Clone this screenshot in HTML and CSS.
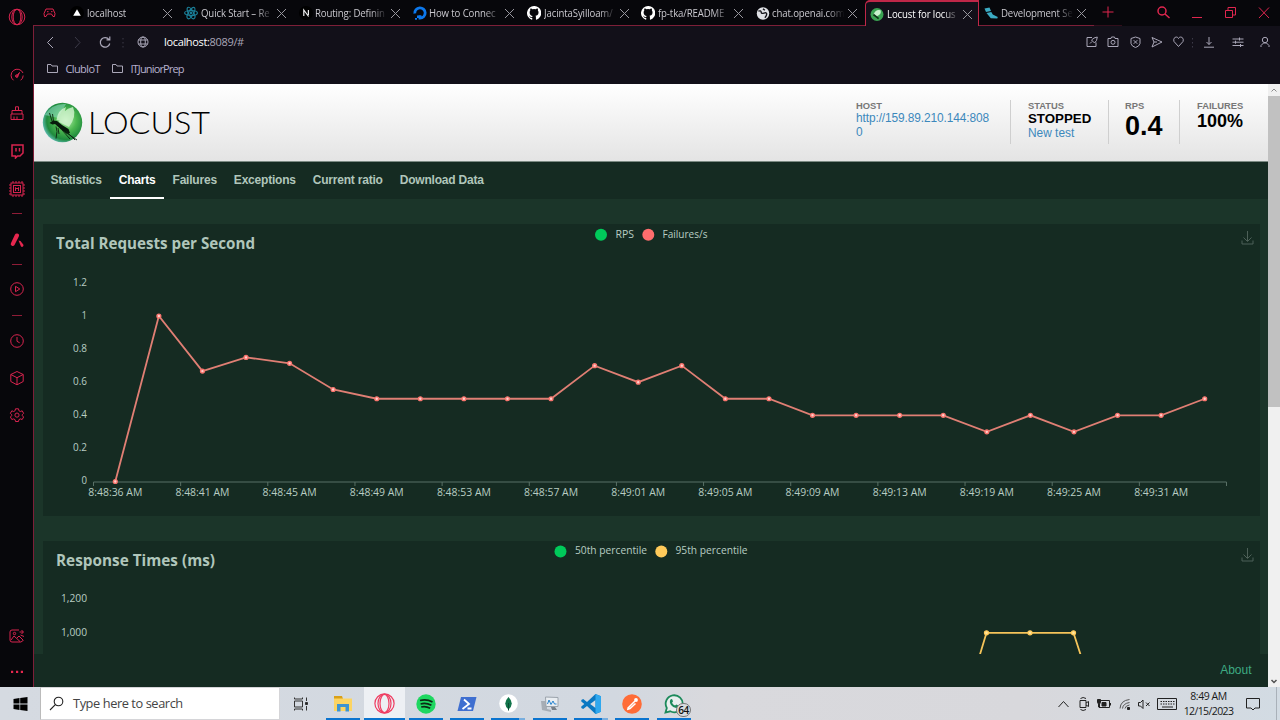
FILE: index.html
```html
<!DOCTYPE html>
<html lang="en">
<head>
<meta charset="utf-8">
<title>Locust for locustfile.py</title>
<link rel="stylesheet" href="styles.css">
</head>
<body>
<div class="browser">
  <aside class="rail">
    <div class="cell h34"><svg width="18" height="18" viewBox="0 0 18 18"><circle cx="9" cy="9" r="7.8"/><ellipse cx="9" cy="9" rx="3.8" ry="7.6"/><ellipse cx="9" cy="9" rx="5.2" ry="7.7"/></svg></div>
    <div class="cell h38 first"><svg width="16" height="16" viewBox="0 0 16 16"><path d="M4.5 13.3A6.2 6.2 0 1 1 14 6M14.2 8.5a6 6 0 0 1-2.6 4.8M7 9.5l3.5-4-2.3 5z"/><circle cx="7.7" cy="9" r="1.2"/></svg></div>
    <div class="cell h38"><svg width="16" height="16" viewBox="0 0 16 16"><path d="M6.5 5.5V1.8h3v3.7M3 9V5.5h10V9M2 9h12v5.5H2zM5 14v-2.5M8 14v-2.5"/></svg></div>
    <div class="cell h38"><svg width="16" height="16" viewBox="0 0 16 16"><path class="bold" d="M3 2h11v8l-3 3H8.500l-2 2v-2H3zM7 5v3.500M10.500 5v3.500"/></svg></div>
    <div class="cell h38"><svg width="18" height="18" viewBox="0 0 18 18"><rect x="3" y="3" width="12" height="12"/><rect x="5.500" y="5.500" width="7" height="7"/><path d="M5 3V1M8 3V1M11 3V1M14 3V1M5 17v-2M8 17v-2M11 17v-2M14 17v-2M1 5h2M1 8h2M1 11h2M1 14h2M15 5h2M15 8h2M15 11h2M15 14h2M7.500 11V7.500L9 9l1.500-1.500V11"/></svg></div>
    <div class="cell h10"><i class="dash"></i></div>
    <div class="cell h44"><svg width="16" height="16" viewBox="0 0 16 16"><path class="fill" d="M7.800 1.500a2 2 0 0 1 2 3L5.500 13a2 2 0 0 1-3.500-2l4-8.500a2 2 0 0 1 1.800-1z"/><path class="fill" d="M9.500 8.500l2 .5 2.700 3.500a1.500 1.500 0 0 1-2.200 2z"/></svg></div>
    <div class="cell h4"><i class="dash"></i></div>
    <div class="cell h46"><svg width="16" height="16" viewBox="0 0 16 16"><circle cx="8" cy="8" r="6.300"/><path d="M6.500 5.300v5.400L10.800 8z"/></svg></div>
    <div class="cell h6"><i class="dash"></i></div>
    <div class="cell h46"><svg width="16" height="16" viewBox="0 0 16 16"><circle cx="8" cy="8" r="6.300"/><path d="M8 4v4.300l2.700 1.500"/></svg></div>
    <div class="cell h28"><svg width="16" height="16" viewBox="0 0 16 16"><path d="M8 1.500l6.200 3v7L8 14.800l-6.200-3.300v-7zM1.800 4.500L8 7.700l6.200-3.200M8 7.700v7"/></svg></div>
    <div class="cell h46"><svg width="16" height="16" viewBox="0 0 16 16"><path d="M6.500 1.800h3l.4 1.900 1.400.8 1.900-.7 1.400 2.500-1.300 1.400v1l1.300 1.300-1.400 2.500-1.900-.6-1.400.8-.4 1.800h-3l-.4-1.800-1.400-.8-1.900.6L1.400 10l1.300-1.300v-1L1.400 6.300l1.400-2.500 1.900.7 1.400-.8z"/><circle cx="8" cy="8.100" r="2.100"/></svg></div>
    <div class="cell h42 bottom"><svg width="16" height="14" viewBox="0 0 16 14"><path d="M10 1H3a2 2 0 0 0-2 2v8a2 2 0 0 0 2 2h9l2-1.500M2 11l3-4 6 5.500M8 9l2-2 4.500 4.500M10.500 3h3.500M12.500 1l2 2-2 2M15 7.500L11.500 6"/><circle cx="5.500" cy="4.500" r="1.200"/></svg></div>
    <div class="cell h30"><svg width="14" height="4" viewBox="0 0 14 4"><path class="fill" d="M1 .8h2.200V3H1zM6 .8h2.200V3H6zM10.800.8H13V3h-2.200z"/></svg></div>
  </aside>

  <main class="window">
    <div class="tabstrip">
      <div class="pad"><svg width="13" height="10" viewBox="0 0 13 10"><path d="M3 1h7l2 4.500-.5 3H10L8.500 6h-4L3 8.500H1.500L1 5.500zM4 3.700h1.500M8 3.700h1.500"/></svg></div>
      <div class="tab"><svg class="fav" width="14" height="14" viewBox="0 0 14 14"><circle cx="7" cy="7" r="7" fill="#000"/><path fill="#fff" d="M7 3.200l3.800 6.500H3.200z"/></svg><span class="label">localhost</span><i class="x"></i></div>
      <div class="tab"><svg class="fav" width="14" height="14" viewBox="0 0 14 14" fill="none" stroke="#1b7f98" stroke-width="1.200"><ellipse cx="7" cy="7" rx="6.400" ry="2.500"/><ellipse cx="7" cy="7" rx="6.400" ry="2.500" transform="rotate(60 7 7)"/><ellipse cx="7" cy="7" rx="6.400" ry="2.500" transform="rotate(120 7 7)"/><circle cx="7" cy="7" r=".8"/></svg><span class="label">Quick Start – Re</span><i class="x"></i></div>
      <div class="tab"><svg class="fav" width="14" height="14" viewBox="0 0 14 14"><circle cx="7" cy="7" r="7" fill="#000"/><path d="M4.800 10V4l4.800 6.500M9.400 4v5" fill="none" stroke="#eee" stroke-width="1.200"/></svg><span class="label">Routing: Definin</span><i class="x"></i></div>
      <div class="tab"><svg class="fav" width="14" height="14" viewBox="0 0 14 14"><path d="M1.800 7.500A5.200 5.200 0 1 1 7 12.200V9.200" fill="none" stroke="#0c78ec" stroke-width="2.800"/><path fill="#0c78ec" d="M4 9.500h2.600V12H4zM2 12h2v1.800H2z"/></svg><span class="label">How to Connec</span><i class="x"></i></div>
      <div class="tab"><svg class="fav" width="14" height="14" viewBox="0 0 16 16"><path fill="#fff" d="M8 0a8 8 0 0 0-2.500 15.600c.4 0 .5-.2.500-.4v-1.500c-2.200.5-2.700-1-2.700-1-.4-.9-.9-1.200-.9-1.200-.7-.5 0-.5 0-.5.800.1 1.300.9 1.300.9.7 1.200 1.900.9 2.300.7 0-.6.3-.9.5-1.100C4.700 10.900 3 10.200 3 7.300c0-.9.3-1.600.8-2.100-.1-.3-.4-1.100.1-2.200 0 0 .7-.2 2.200.8a7.500 7.500 0 0 1 4 0c1.500-1 2.200-.8 2.200-.8.400 1.100.2 1.900.1 2.200.5.500.8 1.200.8 2.100 0 2.900-1.800 3.600-3.500 3.800.3.200.5.700.5 1.500v2.600c0 .2.200.5.600.4A8 8 0 0 0 8 0z"/></svg><span class="label">JacintaSyilloam/</span><i class="x"></i></div>
      <div class="tab"><svg class="fav" width="14" height="14" viewBox="0 0 16 16"><path fill="#fff" d="M8 0a8 8 0 0 0-2.500 15.600c.4 0 .5-.2.500-.4v-1.500c-2.200.5-2.700-1-2.700-1-.4-.9-.9-1.200-.9-1.200-.7-.5 0-.5 0-.5.800.1 1.300.9 1.300.9.7 1.200 1.900.9 2.300.7 0-.6.3-.9.5-1.100C4.700 10.900 3 10.200 3 7.300c0-.9.3-1.600.8-2.100-.1-.3-.4-1.100.1-2.200 0 0 .7-.2 2.200.8a7.500 7.500 0 0 1 4 0c1.500-1 2.200-.8 2.200-.8.400 1.100.2 1.900.1 2.200.5.500.8 1.200.8 2.100 0 2.900-1.800 3.600-3.500 3.800.3.200.5.700.5 1.500v2.600c0 .2.200.5.600.4A8 8 0 0 0 8 0z"/></svg><span class="label">fp-tka/README</span><i class="x"></i></div>
      <div class="tab"><svg class="fav" width="13" height="13" viewBox="0 0 14 14"><circle cx="7" cy="7" r="6.700" fill="#dfe1e5"/><path d="M2 4.500q3-1 3 1t3 1 3 1-2 4M7 2l2 1.500" fill="none" stroke="#15151b" stroke-width="1.500"/></svg><span class="label">chat.openai.com</span><i class="x"></i></div>
      <div class="tab active"><svg class="fav" width="13" height="13" viewBox="0 0 40 40"><circle cx="20" cy="20" r="20" fill="#3aa352"/><path d="M9 21Q15 3 31 7q4 12-11 18z" fill="#c8f2cd"/><path d="M9 20l16 13" stroke="#10331a" stroke-width="5"/></svg><span class="label">Locust for locus</span><i class="x"></i></div>
      <div class="tab"><svg class="fav" width="14" height="12" viewBox="0 0 14 12"><path fill="#3babc3" d="M.5 1.500l5-1L7 4l-5 1zM2.500 6l4.800-1 1.500 2.500 5 2.500-.5 1.500-6.500-.3z"/></svg><span class="label">Development Se</span><i class="x"></i></div>
      <div class="plus"><svg width="12" height="12" viewBox="0 0 12 12"><path d="M6 .5v11M.5 6h11"/></svg></div>
      <div class="controls">
        <svg width="34" height="26" viewBox="0 0 34 26"><circle cx="16" cy="11" r="4" stroke-width="1.500"/><path d="M19 14l4.500 4" stroke-width="1.500"/></svg>
        <svg width="33" height="26" viewBox="0 0 33 26"><path d="M12 17.500h10"/></svg>
        <svg width="34" height="26" viewBox="0 0 34 26"><path d="M12.500 10.500h7v7h-7zM15 10V7.500h7.500V15H20"/></svg>
        <svg width="33" height="26" viewBox="0 0 33 26"><path d="M12 7.500L22 18M22 7.500L12 18"/></svg>
      </div>
    </div>

    <div class="toolbar">
      <svg width="32" height="20" viewBox="0 0 32 20"><path d="M19 5l-5.500 5.500L19 16"/></svg>
      <svg class="dim" width="22" height="20" viewBox="0 0 22 20"><path d="M9 5l5 5.500L9 16"/></svg>
      <svg width="34" height="20" viewBox="0 0 34 20"><path d="M21 7.500a4.800 4.800 0 1 0 .8 4M21.800 4.500v3.300h-3.300" stroke-width="1.200"/></svg>
      <svg class="dim" width="2" height="20" viewBox="0 0 2 20"><path d="M1 6v10" stroke-dasharray="1.500 2.500"/></svg>
      <svg width="38" height="20" viewBox="0 0 38 20"><circle cx="19" cy="10" r="5"/><ellipse cx="19" cy="10" rx="2.300" ry="5"/><path d="M14.500 8h9M14.500 12h9"/></svg>
      <span class="url"><b>localhost:</b>8089/#</span>
      <div class="actions">
        <svg width="22" height="20" viewBox="0 0 22 20"><path d="M11 5.500H6v9h9V10.500M9 11.500l2-2M10.500 8l3 3 2-2.500 .8-3.500-3.300 1z"/></svg>
        <svg width="20" height="20" viewBox="0 0 20 20"><path d="M5 6.500h3l.5-1.500h3l.5 1.500h3v8H5z"/><circle cx="10" cy="10.300" r="2"/></svg>
        <svg width="25" height="20" viewBox="0 0 25 20"><path d="M12.500 5l4.500 1.500v5l-1.500 2.500-3 1.500-3-1.500L8 11.500v-5zM10.700 8.200l3.600 3.600M14.300 8.200l-3.600 3.600"/></svg>
        <svg width="18" height="20" viewBox="0 0 18 20"><path d="M4 5.500l10 4.500-10 5 2-5zM6 10h3"/></svg>
        <svg width="25" height="20" viewBox="0 0 25 20"><path d="M12.500 14.500L8 9.500C6.500 5.500 11 3.500 12.500 6.500c1.500-3 6-1 4.500 3z"/></svg>
        <svg class="dim" width="3" height="20" viewBox="0 0 3 20"><path d="M1.500 6v10" stroke-dasharray="1.500 2.500"/></svg>
        <svg width="31" height="20" viewBox="0 0 31 20"><path d="M15 5v7.500M12.500 10l2.500 2.500L17.500 10M10 15.200h10"/></svg>
        <svg width="26" height="20" viewBox="0 0 26 20"><path d="M7.500 7h11M7.500 10.200h11M7.500 13.500h11M14.500 5.500v3M10.500 8.700v3M15.500 12v3"/></svg>
        <svg width="28" height="20" viewBox="0 0 28 20"><circle cx="14" cy="8" r="2.700"/><path d="M10 15v-1.500l2.500-2.500h3l2.500 2.500V15"/></svg>
      </div>
    </div>
    <div class="bookmarks">
      <span class="mark"><svg width="11" height="9" viewBox="0 0 11 9"><path d="M.5.500h3.500l1 1.500h5.500v6.500H.5z"/></svg>ClubIoT</span>
      <span class="mark"><svg width="11" height="9" viewBox="0 0 11 9"><path d="M.5.500h3.500l1 1.500h5.500v6.500H.5z"/></svg><em class="prep">ITJuniorPrep</em></span>
    </div>

    <div class="viewport">
      <div class="page">
        <header class="top">
          <svg class="logo" width="170" height="42" viewBox="42 102 170 42">
            <defs><radialGradient id="ball" cx=".58" cy=".45" r=".6"><stop offset="0" stop-color="#b5efae"/><stop offset=".45" stop-color="#4cb850"/><stop offset=".8" stop-color="#1f8a3d"/><stop offset="1" stop-color="#5fbdb4"/></radialGradient></defs>
            <circle cx="62.500" cy="122.500" r="19.700" fill="url(#ball)"/>
            <path d="M45 115q7-12 21-11l-8 14z" fill="#8fdcc8" opacity=".55"/>
            <path d="M56.500 120q1-10 9.500-13l-4 14zM59 122q3-13 14-15 4 9-4 20z" fill="#d5f5d2" opacity=".8"/>
            <path d="M49.500 123l3.500-2.500 4 .5 5 4 6.500 4 1.500 4-3 .8-6-4.300-6-5.500-2.500.5z" fill="#071a0c"/>
            <path d="M52 121l-2.500-8M53.500 121l-1-7M56 126.500l1 5-1 7M58 128l1 6M65 132l12 8M66 131l9 9M62 130l8 9" fill="none" stroke="#0b2411" stroke-width=".9"/>
            <text class="wordmark" x="88" y="133.500" textLength="122" lengthAdjust="spacingAndGlyphs">LOCUST</text>
          </svg>
          <div class="stats">
            <div class="stat host"><div class="cap">HOST</div><a>http://159.89.210.144:8080</a></div>
            <div class="stat status"><div class="cap">STATUS</div><div class="state">STOPPED</div><a>New test</a></div>
            <div class="stat rps"><div class="cap">RPS</div><div class="big">0.4</div></div>
            <div class="stat fails"><div class="cap">FAILURES</div><div class="mid">100%</div></div>
          </div>
        </header>
        <nav class="menu"><a>Statistics</a><a class="on">Charts</a><a>Failures</a><a>Exceptions</a><a>Current ratio</a><a>Download Data</a></nav>
        <section class="content">
          <svg class="chart" id="rps" width="1217" height="292" viewBox="43 224 1217 292">
            <text class="title" x="56" y="249" textLength="199" lengthAdjust="spacingAndGlyphs">Total Requests per Second</text>
            <circle cx="601" cy="234.700" r="6" fill="#00ca5a"/><text x="615.500" y="237.700" textLength="18.500" lengthAdjust="spacingAndGlyphs">RPS</text>
            <circle cx="648.300" cy="234.700" r="6" fill="#ff6d6d"/><text x="662.500" y="237.700" textLength="45" lengthAdjust="spacingAndGlyphs">Failures/s</text>
            <path class="save" d="M1247.500 231v10M1243.500 237.500l4 4 4-4M1242 240.500v3.500h11v-3.500"/>
          </svg>
          <svg class="chart second" id="times" width="1217" height="114" viewBox="43 541 1217 114">
            <text class="title" x="56" y="566" textLength="159" lengthAdjust="spacingAndGlyphs">Response Times (ms)</text>
            <circle cx="560.500" cy="551.500" r="6" fill="#00ca5a"/><text x="575" y="554.300" textLength="72" lengthAdjust="spacingAndGlyphs">50th percentile</text>
            <circle cx="661.300" cy="551.500" r="6" fill="#ffca5a"/><text x="675.500" y="554.300" textLength="72" lengthAdjust="spacingAndGlyphs">95th percentile</text>
            <path class="save" d="M1247.500 548v10M1243.500 554.500l4 4 4-4M1242 557.500v3.500h11v-3.500"/>
            <text class="tick" x="87" y="602.200" textLength="26" lengthAdjust="spacingAndGlyphs">1,200</text>
            <text class="tick" x="87" y="635.700" textLength="26" lengthAdjust="spacingAndGlyphs">1,000</text>
            <path d="M979.500 656l7-23.200h87l7.500 23.200" fill="none" stroke="#f5c45a" stroke-width="1.800"/>
            <g fill="#ffe49c" stroke="#ffca5a" stroke-width="1.300"><circle cx="986.500" cy="632.800" r="2"/><circle cx="1030" cy="632.800" r="2"/><circle cx="1073.500" cy="632.800" r="2"/></g>
          </svg>
        </section>
        <footer class="foot"><a>About</a></footer>
      </div>
      <div class="scroll">
        <svg width="12" height="12" viewBox="0 0 12 12"><path d="M3.500 7.500L6 5l2.500 2.500" stroke="#8a8a8a"/></svg>
        <div class="thumb"></div>
        <svg class="down" width="12" height="12" viewBox="0 0 12 12"><path d="M3.500 5L6 7.500 8.500 5" stroke="#505050" stroke-width="1.500"/></svg>
      </div>
    </div>
  </main>
</div>

<div class="taskbar">
  <div class="start"><svg width="15" height="14" viewBox="0 0 15 14"><path d="M.5 2l6-.9v5.500h-6zM7.200 1L14.500 0v6.600H7.200zM.5 7.400h6v5.500l-6-.9zM7.200 7.400h7.300V14l-7.300-1z"/></svg></div>
  <div class="search"><svg width="15" height="15" viewBox="0 0 15 15"><circle cx="9.500" cy="5.500" r="4.300"/><path d="M6.300 8.700L1 14"/></svg><span>Type here to search</span></div>
  <div class="view"><svg width="16" height="14" viewBox="0 0 16 14"><path d="M1.500 4h8v6h-8zM1.500.5V2h8V.5M1.500 13.500V12h8v1.500M13.500.5V4M13.500 9v4.500"/><path d="M12.500 5.500h2v2h-2z" fill="#222"/></svg></div>
  <div class="app run"><svg width="20" height="18" viewBox="0 0 20 18"><path fill="#d9a017" d="M1 1h8l1 3H1z"/><path fill="#fcd462" d="M1 3.500h18V16H1z"/><path fill="#3d94d2" d="M4 9h12v7.500h-3.500V12h-5v4.500H4z"/></svg></div>
  <div class="app run lit"><svg width="21" height="21" viewBox="0 0 21 21" fill="none" stroke="#ef3d62" stroke-width="1.200"><circle cx="10.500" cy="10.500" r="9.600"/><ellipse cx="10.500" cy="10.500" rx="4.500" ry="9"/><ellipse cx="10.500" cy="10.500" rx="6.500" ry="9.300"/></svg></div>
  <div class="app run"><svg width="20" height="20" viewBox="0 0 20 20"><circle cx="10" cy="10" r="9.700" fill="#1ed760"/><path d="M4 6.500q6.500-1.800 12.500 1.400M4.600 10q5.500-1.500 10.800 1.300M5.200 13q4.500-1.200 9 1.200" fill="none" stroke="#0b2a14" stroke-width="1.700"/></svg></div>
  <div class="app run"><svg width="20" height="16" viewBox="0 0 20 16"><path fill="#3f6fd0" d="M4 1h15.500l-3.500 14H.5z"/><path d="M7 3.500l5 4.500-6.500 5M10.500 12.500h4" fill="none" stroke="#fff" stroke-width="1.800"/></svg></div>
  <div class="app run multi"><svg width="19" height="19" viewBox="0 0 19 19"><circle cx="9.500" cy="9.500" r="9.300" fill="#fff"/><path fill="#11744a" d="M9.500 3q6.500 6.500 0 12.500-6.500-6 0-12.500z"/><path d="M9.500 9v7.500" stroke="#0a4d35"/></svg></div>
  <div class="app run"><svg width="20" height="18" viewBox="0 0 20 18"><path fill="#a6adb5" d="M1 6h6v8l4 1v2l-9-2z"/><path fill="#e9edf1" stroke="#9ca4ac" d="M5.500 2l12.500.5v9L6 11.500z"/><path d="M7.500 9l1.500-4 2 4.500L13 6l1.500 3h2" fill="none" stroke="#2583cf"/><path fill="#777f87" d="M11 12h4l2 3h-5z"/></svg></div>
  <div class="app run multi"><svg width="20" height="20" viewBox="0 0 20 20"><path fill="#0a78c2" d="M14.500 0L20 2.300v15.400L14.500 20 6 12l-3.800 3L.3 14v-1.500L3.300 10 .3 7.500V6l1.900-1L6 8z"/><path fill="#d7dce3" d="M14.500 6v8L9.200 10z"/><path fill="#2fa8ef" d="M14.500 0L20 2.300v15.400L14.500 20z"/></svg></div>
  <div class="app run"><svg width="20" height="20" viewBox="0 0 20 20"><circle cx="10" cy="10" r="9.800" fill="#ff6c37"/><path d="M5.500 14.500L13 7M5 15.500l3-1 5.500-5" fill="none" stroke="#fff" stroke-width="1.500"/><circle cx="14" cy="6" r="1.900" fill="#fff"/></svg></div>
  <div class="app run wa"><svg width="20" height="20" viewBox="0 0 20 20"><path d="M1.500 18.500L2.800 14A8.500 8.500 0 1 1 6.200 17.300z" fill="#e9eeee" stroke="#1c8a5b" stroke-width="1.800"/><path fill="#1c8a5b" d="M6.500 5.500q1.500-1 2 .5l.5 1.500-1 1.200q1 2 3 2.800l1.300-1 2.200 1q0 2-2 2.500-3 .2-5.500-3-2-3-.5-5.500z"/></svg><span class="badge">64</span></div>
  <div class="tray">
    <svg width="21" height="20" viewBox="0 0 21 20"><path d="M5.500 13l5-5.500 5 5.500"/></svg>
    <svg width="20" height="20" viewBox="0 0 20 20"><path d="M6 6.500h6v7H6zM12 9l2.500-1.500v5L12 11M6.500 4.500Q9 2.500 12 4.500M6.500 15.500q2.500 2 5.500 0"/></svg>
    <svg width="20" height="20" viewBox="0 0 20 20"><path d="M5 6.500h10.500v7H5M16.500 9v2.500"/><path d="M3.500 5.500h3v3l-1 1.500V13h-1v-3l-1-1.500zM8 8.500h4V12H8z" fill="#222"/></svg>
    <svg width="21" height="20" viewBox="0 0 21 20"><path d="M6 14.500Q6.500 6.500 15.500 5.500M8.500 14.500q.5-5 7-6M11 14.500q.5-3 4.500-3.500" stroke="#555"/><path d="M13.500 13.500h2v2h-2z" fill="#222"/></svg>
    <svg width="18" height="20" viewBox="0 0 18 20"><path d="M3.500 8.500h2L8 6v8.500L5.500 12h-2zM11 8.500l3.500 3.500M14.500 8.500L11 12"/></svg>
    <svg width="29" height="20" viewBox="0 0 29 20"><path d="M4.500 4.500h19v11h-19z"/><path d="M7.500 7.500h14M7.500 10h14" stroke-dasharray="1.500 1"/><path d="M9 13h11"/></svg>
    <div class="clock"><span>8:49 AM</span><span class="date">12/15/2023</span></div>
    <svg class="note" width="14" height="14" viewBox="0 0 14 14"><path d="M.5 1.500h13v9.500H9L7 13l-2-2H.5z"/></svg>
    <i class="peek"></i>
  </div>
</div>
<script src="charts.js"></script>
</body>
</html>
```
FILE: styles.css
```css
* { box-sizing: border-box; }
body {
  margin: 0;
  width: 1280px;
  height: 720px;
  overflow: hidden;
  background: #07070b;
  font-family: "Open Sans", "Noto Sans", sans-serif;
  font-size: 11px;
}
svg { display: block; flex: none; }
.browser { display: flex; height: 687px; }

/* side rail */
.rail { width: 33px; display: flex; flex-direction: column; background: #07070b; }
.rail .cell { display: flex; align-items: center; justify-content: center; padding-left: 1px; flex: none; }
.rail svg { fill: none; stroke: #d8244f; stroke-width: 1; }
.rail svg .fill { fill: #e6274f; stroke: none; }
.rail svg .bold { stroke-width: 1.5; }
.dash { width: 10px; height: 1px; background: #8f1c37; }
.h34 { height: 34px; } .h38 { height: 38px; } .h10 { height: 10px; } .h44 { height: 44px; }
.h4 { height: 4px; } .h46 { height: 46px; } .h6 { height: 6px; } .h28 { height: 28px; }
.h42 { height: 42px; } .h30 { height: 30px; }
.first { margin-top: 22px; }
.bottom { margin-top: auto; }

/* tab strip */
.window { width: 1247px; display: flex; flex-direction: column; border-left: 1px solid #7d1f38; background: #121019; }
.tabstrip { display: flex; height: 26px; margin-left: -1px; background: #07070b; }
.pad { width: 32px; padding: 8px 0 0 10px; border-bottom: 1px solid #7d1f38; flex: none; }
.pad svg, .plus svg, .controls svg { fill: none; stroke: #e0264f; }
.tab { width: 114.3px; display: flex; align-items: center; border-bottom: 1px solid #7d1f38; padding: 1px 7px 0 5px; color: #c9c8ce; flex: none; }
.fav { width: 14px; margin-right: 2.5px; }
.label {
  width: 86px; margin-right: -11px; white-space: nowrap; flex: none;
  font-size: 11.2px; letter-spacing: -0.15px; line-height: 18px;
  transform: scaleX(.86); transform-origin: left;
  -webkit-mask-image: linear-gradient(90deg, #000 75%, transparent 98%);
  mask-image: linear-gradient(90deg, #000 75%, transparent 98%);
}
.x {
  width: 9px; height: 9px; flex: none; margin-left: 1px;
  background: linear-gradient(45deg, transparent 46%, #97969d 47%, #97969d 53%, transparent 54%),
    linear-gradient(-45deg, transparent 46%, #97969d 47%, #97969d 53%, transparent 54%);
}
.tab.active { background: #121019; border: 1px solid #c02748; border-top-width: 2px; border-bottom: 0; border-top-left-radius: 5px; padding: 0 6px 0 4px; color: #fff; }
.plus { width: 28px; padding: 6px 0 0 8px; border-bottom: 1px solid #320e1b; }
.controls { display: flex; margin-left: auto; }

/* address bar */
.toolbar { display: flex; align-items: center; height: 32px; color: #a9a6b8; }
.toolbar svg, .bookmarks svg { fill: none; stroke: #aaa7b8; }
.toolbar svg.dim { stroke: #3c3a48; }
.url { margin-left: 2px; font-size: 11px; letter-spacing: -0.34px; padding-bottom: 1px; }
.url b { font-weight: 400; color: #fff; }
.actions { display: flex; margin-left: auto; padding-right: 1.5px; }
.bookmarks { display: flex; height: 26px; align-items: center; padding: 0 0 5px 13px; color: #b7b2cf; }
.mark { display: flex; align-items: center; gap: 7.5px; margin-right: 12px; font-size: 11px; letter-spacing: -0.65px; }
.prep { font-style: normal; letter-spacing: -0.85px; }

/* web page */
.viewport { display: flex; height: 603px; }
.page { width: 1234px; background: #1b3529; display: flex; flex-direction: column; font-family: "Liberation Sans", Arial, sans-serif; }
.top { height: 78px; display: flex; background: linear-gradient(#fff, #e4e4e4); border-bottom: 1px solid #7b8a83; padding: 18px 0 0 8px; }
.wordmark { font-family: Lato, sans-serif; font-weight: 300; font-size: 30.500px; fill: #000; }
.stats { display: flex; margin-left: auto; height: 44px; margin-top: -2px; color: #000; }
.stat { border-left: 1px solid #cfcfcf; padding-left: 17px; }
.stat a { color: #3c88bc; font-size: 11.9px; line-height: 14px; display: block; }
.cap { font-size: 9.4px; line-height: 11px; font-weight: 700; color: #777; }
.host { width: 171px; border-left: 0; padding-right: 17px; padding-top: 0; }
.host a { word-break: break-all; letter-spacing: -0.1px; }
.status { width: 98px; }
.rps { width: 71px; padding-left: 16px; }
.fails { width: 89px; }
.state { font-size: 13.3px; line-height: 15px; font-weight: 700; }
.big { font-size: 27px; line-height: 30px; font-weight: 700; }
.mid { font-size: 18px; line-height: 21px; font-weight: 700; }
.menu { height: 37px; display: flex; background: #152b22; padding-left: 8px; }
.menu a { padding: 0 8.5px; line-height: 36px; font-size: 12px; letter-spacing: -0.21px; font-weight: 700; color: #b0c6bb; height: 37px; white-space: nowrap; }
.menu .on { color: #fff; border-bottom: 2px solid #fff; }
.content { height: 455px; padding: 25px 0 0 9px; overflow: hidden; }
.chart { background: #152b22; font-family: "Open Sans", "Noto Sans", sans-serif; }
.second { margin-top: 25px; }
.chart text { font-size: 10.5px; fill: #b8cdc3; }
.chart .title { font-size: 16.2px; font-weight: 700; fill: #b0c6bb; }
.chart .tick { text-anchor: end; }
.chart .time { text-anchor: middle; }
.save { fill: none; stroke: #4d6058; }
.foot { height: 33px; background: #152b22; text-align: right; padding: 0 16.5px; line-height: 33px; font-size: 12px; color: #3eaa83; }
.scroll { width: 12px; background: #f0f0f0; display: flex; flex-direction: column; }
.scroll svg { fill: none; }
.thumb { height: 311px; background: #c1c1c1; }
.down { margin-top: auto; }

/* taskbar */
.taskbar { height: 33px; display: flex; background: linear-gradient(90deg, #d5dae1, #d2d8e0 48%, #d9d9dd 56%, #d8d8dc 80%, #d2dbe3); color: #191919; }
.start { width: 40px; display: flex; align-items: center; justify-content: center; }
.search { width: 240px; background: #fff; display: flex; align-items: center; border: 1px solid #d5d5d8; border-left-color: #bbb; padding: 0 0 1px 8px; font-size: 12.8px; letter-spacing: -0.42px; color: #444; }
.search svg { fill: none; stroke: #222; stroke-width: 1.1; margin-right: 9px; }
.view { width: 42.300px; display: flex; align-items: center; justify-content: center; }
.view svg { fill: none; stroke: #333; }
.app { width: 41.350px; display: flex; align-items: center; justify-content: center; position: relative; }
.run { background: linear-gradient(#0a74cf, #0a74cf) 50% 100% / 34px 2.500px no-repeat; }
.multi { background: linear-gradient(90deg, #0a74cf 82%, #78aede 82%) 50% 100% / 34px 2.500px no-repeat; }
.lit { background: linear-gradient(#0a74cf, #0a74cf) 50% 100% / 41px 2.500px no-repeat #edf0f4; }
.badge { position: absolute; left: 23px; top: 16px; width: 15px; height: 14px; border: 1px solid #777; border-radius: 7px; background: #d8dce0; font-size: 10px; line-height: 12px; font-weight: 600; text-align: center; color: #111; letter-spacing: -0.5px; }
.tray { display: flex; align-items: center; margin-left: auto; width: 227px; }
.tray svg { fill: none; stroke: #222; }
.clock { width: 53px; display: flex; flex-direction: column; align-items: center; line-height: 15px; font-size: 10.5px; letter-spacing: -0.45px; white-space: nowrap; }
.date { letter-spacing: -0.6px; }
.tray .note { margin-left: 11px; }
.peek { width: 1px; height: 33px; margin: 0 3px 0 auto; background: #a9b1b9; }
```
FILE: charts.js
```js
const NS = 'http://www.w3.org/2000/svg';
const chart = document.getElementById('rps');
const BASE = 481.5, UNIT = 165.5, LEFT = 93.5, RIGHT = 1226.5;

function add(tag, attrs, text) {
  const el = document.createElementNS(NS, tag);
  for (const key in attrs) el.setAttribute(key, attrs[key]);
  if (text) el.textContent = text;
  chart.appendChild(el);
}

['0', '0.2', '0.4', '0.6', '0.8', '1', '1.2'].forEach((label, i) => {
  add('text', { class: 'tick', x: 87, y: BASE + 2.9 - i * UNIT / 5, textLength: label.length > 1 ? 14 : 5.5, lengthAdjust: 'spacingAndGlyphs' }, label);
});

const times = ['8:48:36', '8:48:41', '8:48:45', '8:48:49', '8:48:53', '8:48:57', '8:49:01', '8:49:05', '8:49:09', '8:49:13', '8:49:19', '8:49:25', '8:49:31'];
const gap = (RIGHT - LEFT) / times.length;
let axis = `M${LEFT} 482H${RIGHT}`;
for (let i = 0; i <= times.length; i++) axis += `M${LEFT + i * gap} 482v4`;
add('path', { d: axis, fill: 'none', stroke: '#597066', 'stroke-width': 1 });
times.forEach((t, i) => {
  add('text', { class: 'time', x: LEFT + gap * (i + 0.25), y: 495.7, textLength: 54, lengthAdjust: 'spacingAndGlyphs' }, t + ' AM');
});

const rates = [0, 1, .667, .75, .714, .556, .5, .5, .5, .5, .5, .7, .6, .7, .5, .5, .4, .4, .4, .4, .3, .4, .3, .4, .4, .5];
const points = rates.map((v, i) => [LEFT + gap * (i + 0.5) / 2, BASE - v * UNIT]);
add('polyline', { points: points.join(' '), fill: 'none', stroke: '#e07f74', 'stroke-width': 1.8 });
points.forEach(([x, y]) => add('circle', { cx: x, cy: y, r: 1.9, fill: '#ffd0cc', stroke: '#f8756e', 'stroke-width': 1.4 }));
```
